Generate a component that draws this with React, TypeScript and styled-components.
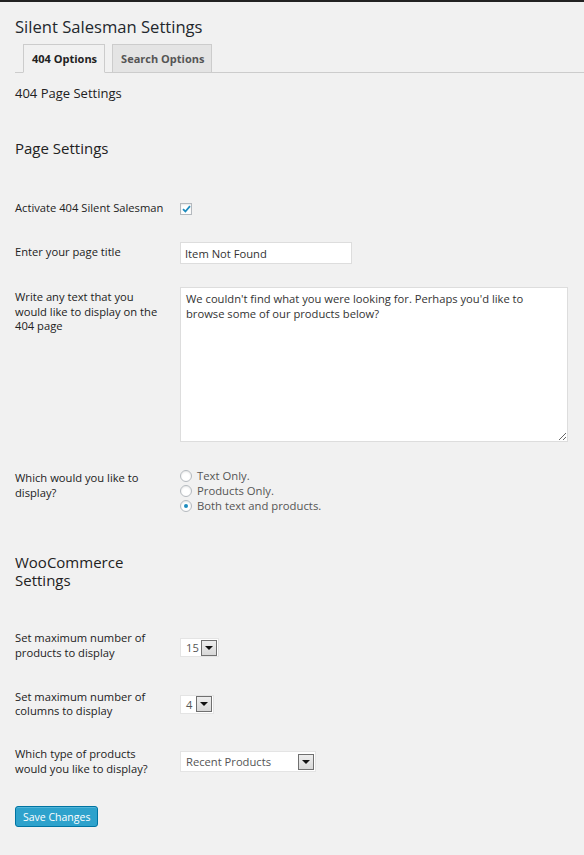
import React from "react";
import styled, { createGlobalStyle } from "styled-components";

const Global = createGlobalStyle`
  html, body { margin: 0; padding: 0; background: #f1f1f1; }
  body { font-family: "Open Sans", "Noto Sans", sans-serif; color: #222; }
  * { box-sizing: border-box; }
`;

const Page = styled.div`
  min-height: 855px;
  border-top: 2px solid #222;
  padding: 0 0 0 15px;
  background: #f1f1f1;
`;

const Title = styled.h2`
  margin: 0;
  padding-top: 13px;
  font-size: 16.6px;
  line-height: 24px;
  font-weight: 400;
  color: #23282d;
`;

const TabBar = styled.div`
  display: flex;
  gap: 7px;
  margin-top: 5px;
  padding-left: 8px;
  border-bottom: 1px solid #ccc;
  height: 29px;
`;

const Tab = styled.div<{ $active?: boolean }>`
  height: 29px;
  padding: 0 7px 0 8px;
  display: flex;
  align-items: center;
  font-size: 11px;
  font-weight: 700;
  border: 1px solid #ccc;
  border-bottom: ${(p) => (p.$active ? "1px solid #f1f1f1" : "1px solid #ccc")};
  background: ${(p) => (p.$active ? "#f1f1f1" : "#e4e4e4")};
  color: ${(p) => (p.$active ? "#222" : "#555")};
`;

const SubTitle = styled.div`
  margin-top: 11px;
  font-size: 13px;
  line-height: 18px;
  color: #222;
`;

const SectionTitle = styled.h3<{ $mt: number; $w?: number }>`
  margin: ${(p) => p.$mt}px 0 0;
  font-size: 15px;
  line-height: 18px;
  font-weight: 400;
  color: #222;
  width: ${(p) => (p.$w ? `${p.$w}px` : "auto")};
`;

const Row = styled.div<{ $mt: number }>`
  display: grid;
  grid-template-columns: 165px 1fr;
  align-items: start;
  margin-top: ${(p) => p.$mt}px;
`;

const Label = styled.div<{ $pt?: number }>`
  padding-top: ${(p) => p.$pt ?? 0}px;
  padding-right: 15px;
  font-size: 11.2px;
  line-height: 14.3px;
  color: #222;
`;

const Control = styled.div<{ $pt?: number }>`
  padding-top: ${(p) => p.$pt ?? 0}px;
  display: flex;
  flex-direction: column;
  align-items: flex-start;
`;

const CheckBox = styled.span`
  width: 12px;
  height: 12px;
  border: 1px solid #b4b9be;
  background: #fff;
  box-shadow: inset 0 1px 2px rgba(0, 0, 0, 0.1);
  display: flex;
  align-items: center;
  justify-content: center;
`;

const TextInput = styled.input`
  width: 172px;
  height: 22px;
  border: 1px solid #ddd;
  background: #fff;
  padding: 0 4px;
  font-family: "Open Sans", sans-serif;
  font-size: 11.2px;
  color: #333;
  outline: none;
`;

const TextArea = styled.textarea`
  width: 388px;
  height: 155px;
  border: 1px solid #ddd;
  background: #fff;
  padding: 3px 5px;
  font-family: "Open Sans", sans-serif;
  font-size: 11.2px;
  line-height: 15px;
  color: #333;
  outline: none;
  resize: both;
`;

const RadioLine = styled.label`
  display: flex;
  align-items: center;
  gap: 5px;
  height: 15px;
  font-size: 11.3px;
  color: #555;
`;

const RadioDot = styled.span<{ $checked?: boolean }>`
  width: 12px;
  height: 12px;
  border-radius: 50%;
  border: 1px solid #b4b9be;
  background: #fff;
  box-shadow: inset 0 1px 2px rgba(0, 0, 0, 0.1);
  display: flex;
  align-items: center;
  justify-content: center;
  &::after {
    content: "";
    width: 4px;
    height: 4px;
    border-radius: 50%;
    background: ${(p) => (p.$checked ? "#1e8cbe" : "transparent")};
  }
`;

const Select = styled.div<{ $w: number; $h: number }>`
  width: ${(p) => p.$w}px;
  height: ${(p) => p.$h}px;
  background: #fff;
  border: 1px solid #e4e4e4;
  display: flex;
  align-items: center;
  justify-content: space-between;
  padding: 0 1px 0 5px;
  font-size: 11.2px;
  color: #555;
`;

const Arrow = styled.span`
  width: 16px;
  height: 16px;
  border: 1px solid #707070;
  background: linear-gradient(#eee, #d8d8d8);
  display: flex;
  align-items: center;
  justify-content: center;
  &::after {
    content: "";
    border-left: 4px solid transparent;
    border-right: 4px solid transparent;
    border-top: 4px solid #111;
  }
`;

const Button = styled.button`
  margin-top: 30px;
  height: 21px;
  padding: 0 7px;
  background: #2ea2cc;
  border: 1px solid #0074a2;
  border-radius: 3px;
  color: #fff;
  font-family: "Open Sans", sans-serif;
  font-size: 10.5px;
  box-shadow: inset 0 1px 0 rgba(120, 200, 230, 0.5);
  display: block;
`;

export default function App() {
  return (
    <>
      <Global />
      <Page>
        <Title>Silent Salesman Settings</Title>
        <TabBar>
          <Tab $active>404 Options</Tab>
          <Tab>Search Options</Tab>
        </TabBar>
        <SubTitle>404 Page Settings</SubTitle>
        <SectionTitle $mt={37}>Page Settings</SectionTitle>

        <Row $mt={44}>
          <Label>Activate 404 Silent Salesman</Label>
          <Control $pt={2}>
            <CheckBox>
              <svg width="9" height="8" viewBox="0 0 9 8">
                <path d="M1 4.2 L3.4 6.5 L8 1.2" fill="none" stroke="#1e8cbe" strokeWidth="1.8" />
              </svg>
            </CheckBox>
          </Control>
        </Row>

        <Row $mt={27}>
          <Label $pt={3}>Enter your page title</Label>
          <Control>
            <TextInput defaultValue="Item Not Found" />
          </Control>
        </Row>

        <Row $mt={23}>
          <Label $pt={3}>Write any text that you would like to display on the 404 page</Label>
          <Control>
            <TextArea defaultValue="We couldn't find what you were looking for. Perhaps you'd like to browse some of our products below?" />
          </Control>
        </Row>

        <Row $mt={26}>
          <Label $pt={3}>Which would you like to display?</Label>
          <Control>
            <RadioLine><RadioDot />Text Only.</RadioLine>
            <RadioLine><RadioDot />Products Only.</RadioLine>
            <RadioLine><RadioDot $checked />Both text and products.</RadioLine>
          </Control>
        </Row>

        <SectionTitle $mt={40} $w={140}>WooCommerce Settings</SectionTitle>

        <Row $mt={42}>
          <Label>Set maximum number of products to display</Label>
          <Control $pt={7}>
            <Select $w={39} $h={19}>15<Arrow /></Select>
          </Control>
        </Row>

        <Row $mt={30}>
          <Label>Set maximum number of columns to display</Label>
          <Control $pt={5}>
            <Select $w={34} $h={19}>4<Arrow /></Select>
          </Control>
        </Row>

        <Row $mt={29}>
          <Label>Which type of products would you like to display?</Label>
          <Control $pt={4}>
            <Select $w={136} $h={21}>Recent Products<Arrow /></Select>
          </Control>
        </Row>

        <Button>Save Changes</Button>
      </Page>
    </>
  );
}
